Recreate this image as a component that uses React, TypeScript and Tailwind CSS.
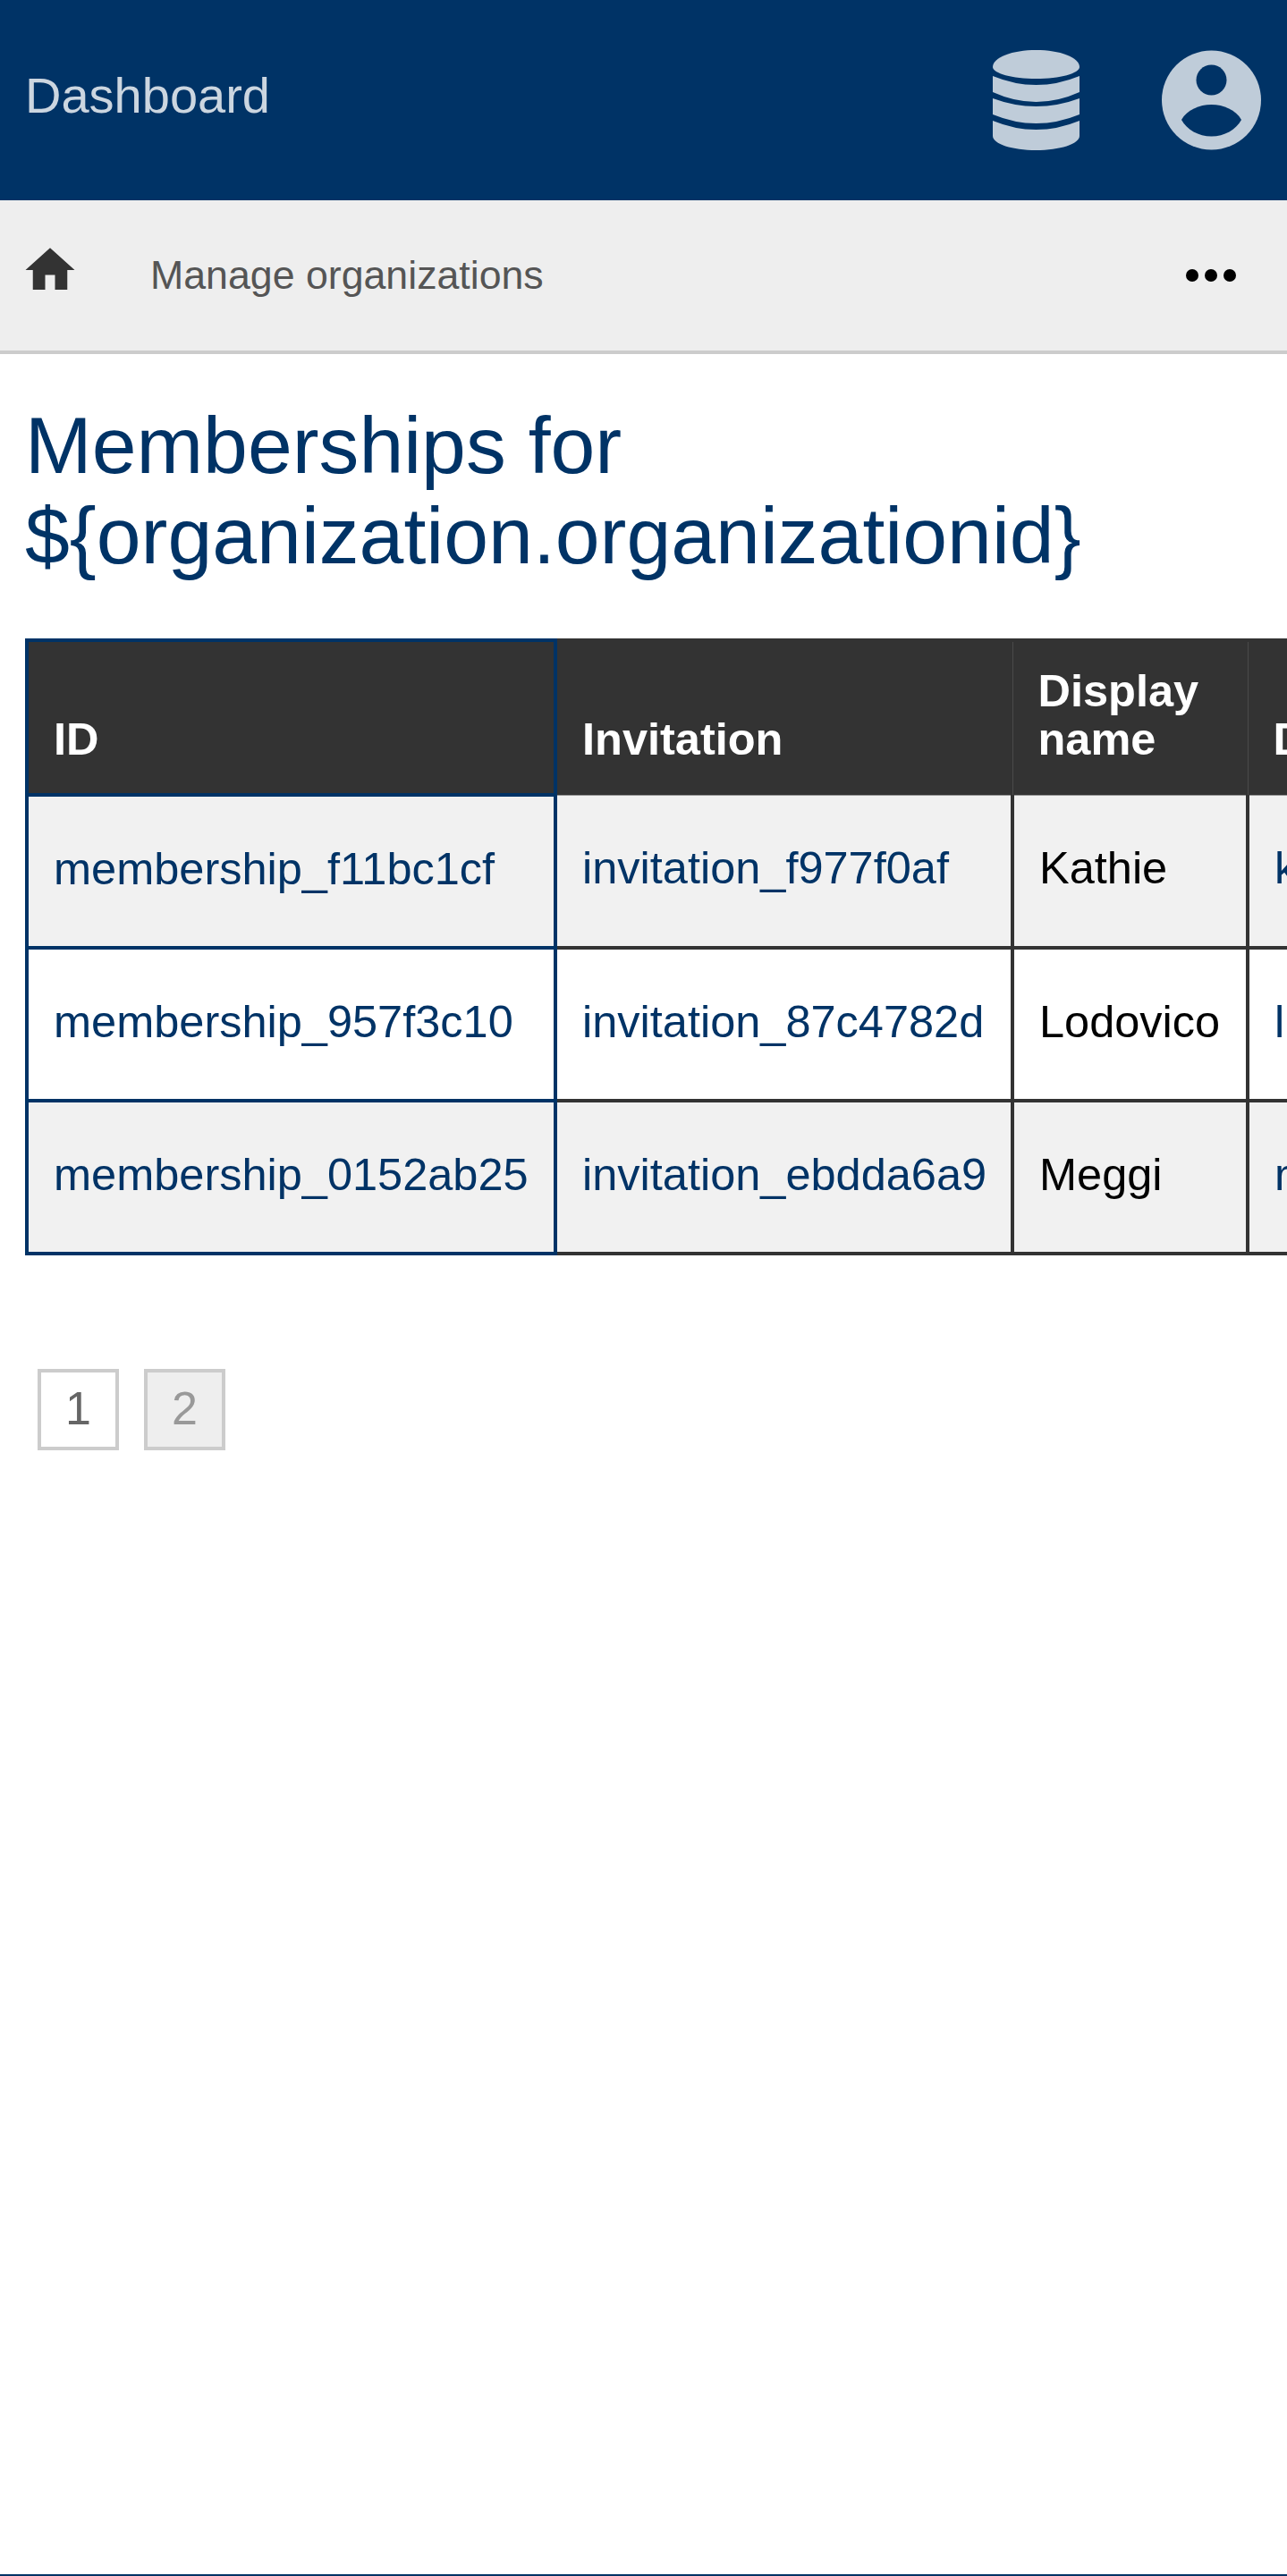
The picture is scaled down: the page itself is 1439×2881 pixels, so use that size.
const rows = [
  { id: "membership_f11bc1cf", invitation: "invitation_f977f0af", name: "Kathie", next: "k", bg: "bg-[#f1f1f1]" },
  { id: "membership_957f3c10", invitation: "invitation_87c4782d", name: "Lodovico", next: "l", bg: "bg-white" },
  { id: "membership_0152ab25", invitation: "invitation_ebdda6a9", name: "Meggi", next: "m", bg: "bg-[#f1f1f1]" },
];

function DatabaseIcon() {
  return (
    <svg width="97" height="112" viewBox="0 0 97 112" fill="#bfccd9">
      <path d="M0 19C0 8 22 0 48.5 0S97 8 97 19C97 26 75 32 48.5 32S0 26 0 19Z" />
      <path d="M0 29Q48.5 49 97 29V47Q48.5 69 0 47Z" />
      <path d="M0 54Q48.5 72 97 54V72Q48.5 92 0 72Z" />
      <path d="M0 79Q48.5 99 97 79V96C97 105 75 112 48.5 112S0 105 0 96Z" />
    </svg>
  );
}

function UserIcon() {
  return (
    <svg width="111" height="112" viewBox="0 0 111 112">
      <circle cx="55.5" cy="56" r="55.5" fill="#bfccd9" />
      <circle cx="55.5" cy="33.5" r="17" fill="#003366" />
      <path d="M22 78C28 67 42 61 55.5 61S83 67 89 78C83 89 70 96.5 55.5 96.5S28 89 22 78Z" fill="#003366" />
    </svg>
  );
}

function HomeIcon() {
  return (
    <svg width="66" height="66" viewBox="0 0 24 24" fill="#333333" className="-ml-[5px] mb-[12px] shrink-0">
      <path d="M10 20v-6h4v6h5v-8h3L12 3 2 12h3v8z" />
    </svg>
  );
}

function DotsIcon() {
  return (
    <svg width="56" height="14" viewBox="0 0 56 14" fill="#000000" className="ml-auto">
      <circle cx="7" cy="7" r="7" />
      <circle cx="28" cy="7" r="7" />
      <circle cx="49" cy="7" r="7" />
    </svg>
  );
}

export default function App() {
  const headCell =
    "border-x-[1px] border-x-[#4a4a4a] border-t-[4px] border-t-[#333333] border-b-[1px] border-b-[#999999] px-[28px] pb-[35px] text-left align-bottom leading-[54px]";
  return (
    <div className="min-h-[2881px] flex flex-col bg-white font-['Liberation_Sans',Arial,sans-serif] overflow-hidden">
      <header className="h-[224px] bg-[#003366] flex items-center pl-[28px] pr-[29px]">
        <a className="text-[56px] leading-none text-[#ccd6e0] mb-[10px]">Dashboard</a>
        <div className="ml-auto flex items-center gap-[92px]">
          <DatabaseIcon />
          <UserIcon />
        </div>
      </header>

      <nav className="h-[172px] bg-[#eeeeee] border-b-4 border-[#cccccc] flex items-center pl-[28px] pr-[57px]">
        <HomeIcon />
        <span className="ml-[79px] text-[44.7px] text-[#555555]">Manage organizations</span>
        <DotsIcon />
      </nav>

      <main className="px-[28px] pt-[52px]">
        <h1 className="text-[89.6px] leading-[101px] text-[#003366]">
          Memberships for
          <br />
          {"${organization.organizationid}"}
        </h1>

        <div className="mt-[64px] -mr-[28px] overflow-hidden">
          <table className="border-collapse table-fixed w-[1765px] text-[50.5px]">
            <thead>
              <tr className="bg-[#333333] text-white font-bold">
                <th className="w-[591px] h-[173px] border-[4px] border-[#003366] pl-[28px] pr-[28px] pb-[33px] text-left align-bottom leading-[54px]">ID</th>
                <th className={headCell + " w-[511px]"}>Invitation</th>
                <th className={headCell + " w-[263px]"}>Display name</th>
                <th className={headCell + " w-[400px]"}>Description</th>
              </tr>
            </thead>
            <tbody>
              {rows.map((r, i) => (
                <tr key={r.id} className={r.bg + " h-[171px]"}>
                  <td className="border-[4px] border-[#003366] px-[28px] pb-[5px] text-[#003366]">{r.id}</td>
                  <td className={"border-[4px] border-[#333333] px-[28px] pb-[5px] text-[#003366]" + (i === 0 ? " border-t-0" : "")}>{r.invitation}</td>
                  <td className={"border-[4px] border-[#333333] px-[28px] pb-[5px] text-black" + (i === 0 ? " border-t-0" : "")}>{r.name}</td>
                  <td className={"border-[4px] border-[#333333] px-[28px] pb-[5px] text-[#003366]" + (i === 0 ? " border-t-0" : "")}>{r.next}</td>
                </tr>
              ))}
            </tbody>
          </table>
        </div>

        <div className="mt-[127px] ml-[14px] flex gap-[28px]">
          <span className="w-[91px] h-[91px] border-[4px] border-[#cccccc] bg-white pb-[4px] flex items-center justify-center text-[52px] text-[#666666]">1</span>
          <span className="w-[91px] h-[91px] border-[4px] border-[#cccccc] bg-[#eeeeee] pb-[4px] flex items-center justify-center text-[52px] text-[#999999]">2</span>
        </div>
      </main>

      <footer className="mt-auto h-[2px] bg-[#003366]" />
    </div>
  );
}
